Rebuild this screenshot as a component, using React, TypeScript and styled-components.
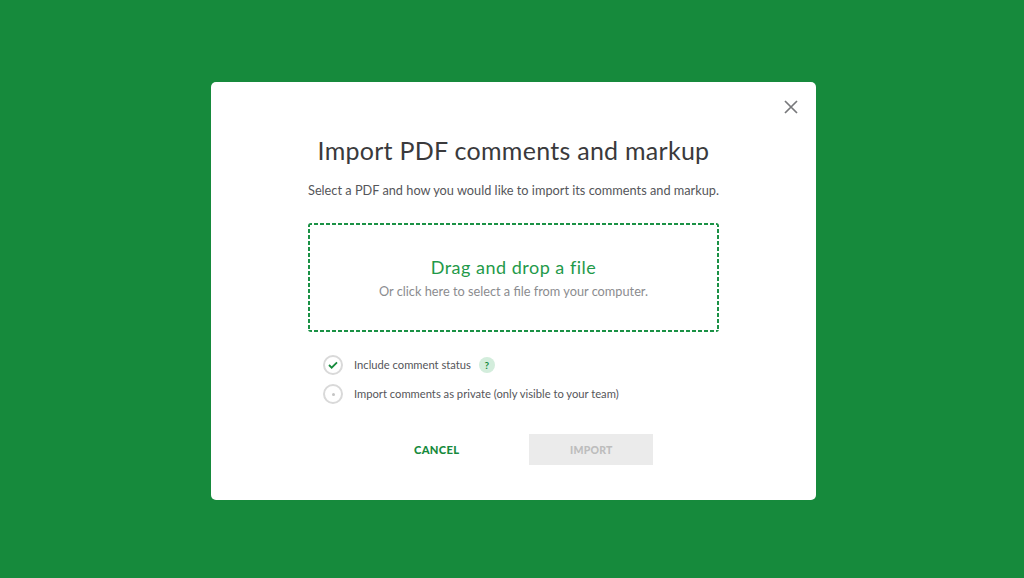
import styled, { createGlobalStyle } from "styled-components";

const GlobalStyle = createGlobalStyle`
  html, body {
    margin: 0;
    padding: 0;
    background: #168a3c;
  }
  body {
    font-family: "Lato", "Liberation Sans", sans-serif;
  }
`

const Page = styled.div`
  width: 1024px;
  height: 578px;
  box-sizing: border-box;
  padding: 82px 0 0 211px;
  background: #168a3c;
  overflow: hidden;
`

const Modal = styled.div`
  position: relative;
  width: 605px;
  height: 418px;
  box-sizing: border-box;
  padding: 52px 97px 0;
  display: flex;
  flex-direction: column;
  background: #fff;
  border-radius: 5px;
`

const CloseButton = styled.button`
  position: absolute;
  top: 17px;
  right: 17px;
  width: 16px;
  height: 16px;
  padding: 0;
  border: 0;
  background: none;
  display: flex;
`

const Title = styled.h1`
  margin: 0;
  font-size: 25px;
  line-height: 32px;
  font-weight: 400;
  letter-spacing: 0.27px;
  color: #3a3a3c;
  text-align: center;
  white-space: nowrap;
`

const Subtitle = styled.p`
  margin: 16px 0 0;
  font-size: 12.75px;
  line-height: 16px;
  color: #55565a;
  text-align: center;
  white-space: nowrap;
`

// border: dashed gives 6px dashes at this width, the design has shorter ones
const DropZone = styled.div`
  margin-top: 25px;
  height: 109px;
  box-sizing: border-box;
  display: flex;
  flex-direction: column;
  align-items: center;
  justify-content: center;
  padding-bottom: 2px;
  border-radius: 3px;
  background:
    repeating-linear-gradient(90deg, #1a9145 0 4px, transparent 4px 6px) top / 100% 2px no-repeat,
    repeating-linear-gradient(90deg, #1a9145 0 4px, transparent 4px 6px) bottom / 100% 2px no-repeat,
    repeating-linear-gradient(180deg, #1a9145 0 4px, transparent 4px 6px) left / 2px 100% no-repeat,
    repeating-linear-gradient(180deg, #1a9145 0 4px, transparent 4px 6px) right / 2px 100% no-repeat;
`

const DropTitle = styled.div`
  font-size: 18px;
  line-height: 24px;
  letter-spacing: 0.5px;
  color: #1f9a4a;
`

const DropHint = styled.div`
  margin-top: 4px;
  font-size: 12.75px;
  line-height: 16px;
  color: #8b8c8f;
`

const OptionList = styled.div`
  margin: 23px 0 0 15px;
  display: flex;
  flex-direction: column;
  gap: 9px;
`

const Option = styled.div`
  display: flex;
  align-items: center;
  height: 20px;
`

const OptionMark = styled.span`
  width: 20px;
  height: 20px;
  box-sizing: border-box;
  flex: none;
  display: flex;
  align-items: center;
  justify-content: center;
  border: 2px solid #d9d9d9;
  border-radius: 50%;
`

const Dot = styled.span`
  width: 3px;
  height: 3px;
  border-radius: 50%;
  background: #c4c4c4;
`

const OptionLabel = styled.span`
  margin-left: 11px;
  font-size: 11.2px;
  line-height: 16px;
  color: #55565a;
  white-space: nowrap;
`

const HelpBadge = styled.span`
  margin-left: 8px;
  width: 16px;
  height: 16px;
  display: flex;
  align-items: center;
  justify-content: center;
  border-radius: 50%;
  background: #d3eddc;
  color: #168a3c;
  font-size: 10px;
  font-weight: 700;
`

const Actions = styled.div`
  margin-top: 30px;
  display: flex;
  align-items: center;
`

const CancelButton = styled.button`
  margin-left: 106px;
  padding: 0;
  border: 0;
  background: none;
  font-family: inherit;
  font-size: 11.2px;
  font-weight: 900;
  letter-spacing: 0.3px;
  color: #168a3c;
`

const ImportButton = styled.button`
  margin-left: 70px;
  width: 124px;
  height: 31px;
  padding: 0;
  border: 0;
  background: #ebebeb;
  font-family: inherit;
  font-size: 10.5px;
  font-weight: 900;
  letter-spacing: 0.2px;
  color: #bdbdbd;
`

const App = () => {
    return (
        <>
            <GlobalStyle/>
            <Page>
                <Modal>
                    <CloseButton aria-label="Close">
                        <svg width="16" height="16" viewBox="0 0 16 16" fill="none">
                            <path d="M2 2L14 14M14 2L2 14" stroke="#77787b" strokeWidth="1.7"/>
                        </svg>
                    </CloseButton>
                    <Title>Import PDF comments and markup</Title>
                    <Subtitle>Select a PDF and how you would like to import its comments and markup.</Subtitle>
                    <DropZone>
                        <DropTitle>Drag and drop a file</DropTitle>
                        <DropHint>Or click here to select a file from your computer.</DropHint>
                    </DropZone>
                    <OptionList>
                        <Option>
                            <OptionMark>
                                <svg width="10" height="8" viewBox="0 0 11 9" fill="none">
                                    <path d="M1 4.5L4 7.5L10 1.5" stroke="#168a3c" strokeWidth="2"/>
                                </svg>
                            </OptionMark>
                            <OptionLabel>Include comment status</OptionLabel>
                            <HelpBadge>?</HelpBadge>
                        </Option>
                        <Option>
                            <OptionMark><Dot/></OptionMark>
                            <OptionLabel>Import comments as private (only visible to your team)</OptionLabel>
                        </Option>
                    </OptionList>
                    <Actions>
                        <CancelButton>CANCEL</CancelButton>
                        <ImportButton disabled>IMPORT</ImportButton>
                    </Actions>
                </Modal>
            </Page>
        </>
    )
}

export default App;
